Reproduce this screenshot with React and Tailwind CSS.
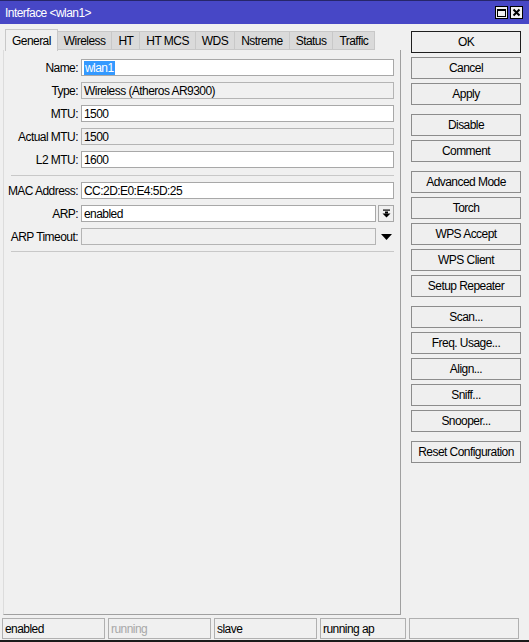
import React from 'react';

const tabs = ['General', 'Wireless', 'HT', 'HT MCS', 'WDS', 'Nstreme', 'Status', 'Traffic'];

const buttonGroups = [
  ['OK', 'Cancel', 'Apply'],
  ['Disable', 'Comment'],
  ['Advanced Mode', 'Torch', 'WPS Accept', 'WPS Client', 'Setup Repeater'],
  ['Scan...', 'Freq. Usage...', 'Align...', 'Sniff...', 'Snooper...'],
  ['Reset Configuration'],
];

function Field({ label, value, gray, selected, extra }) {
  return (
    <div className="flex items-center h-[17px]">
      <div className="w-[74px] text-right shrink-0 whitespace-nowrap">{label}:</div>
      <div
        className={`ml-[3px] h-[17px] flex-1 border flex items-center px-[2px] whitespace-nowrap ${
          gray ? 'bg-[#f0f0f0] border-[#b4b4b4]' : 'bg-white border-[#a8a8a8]'
        }`}
      >
        {selected ? <span className="bg-[#3399ff] text-white px-[1px] leading-[14px]">{value}</span> : value}
      </div>
      {extra}
    </div>
  );
}

export default function App() {
  return (
    <div className="w-[529px] h-[642px] bg-[#f0f0f0] flex flex-col font-['Liberation_Sans',Arial,sans-serif] text-[12px] tracking-[-0.55px] text-black overflow-hidden">
      {/* title bar */}
      <div className="h-[24px] bg-[#4747c6] border-t border-[#26266a] flex items-center justify-between pl-[5px] pr-[6px] text-white shrink-0">
        <span>Interface &lt;wlan1&gt;</span>
        <div className="flex gap-[2px]">
          <div className="w-[13px] h-[13px] bg-[#f0f0f0] border border-black flex items-center justify-center">
            <div className="w-[9px] h-[8px] border border-black border-t-2" />
          </div>
          <div className="w-[13px] h-[13px] bg-[#f0f0f0] border border-black flex items-center justify-center">
            <svg width="9" height="9" viewBox="0 0 9 9">
              <path d="M1.5 1.5 L7.5 7.5 M7.5 1.5 L1.5 7.5" stroke="black" strokeWidth="2" />
            </svg>
          </div>
        </div>
      </div>

      <div className="flex flex-1 min-h-0">
        {/* left side: tabs + panel */}
        <div className="w-[401px] pl-[3px] pt-[4px] pb-[2px] flex flex-col shrink-0">
          <div className="flex items-end h-[22px] pl-[2px]">
            {tabs.map((t, i) =>
              i === 0 ? (
                <div key={t} className="h-[22px] px-[6px] border border-b-0 border-[#c8c8c8] bg-[#f0f0f0] flex items-center relative top-[1px]">
                  {t}
                </div>
              ) : (
                <div key={t} className="h-[19px] px-[6px] border border-l-0 border-[#c8c8c8] bg-[#dadada] flex items-center">
                  {t}
                </div>
              )
            )}
          </div>
          <div className="flex-1 border-l border-r border-b border-[#a0a0a0] border-l-[#dcdcdc] pt-[9px] pr-[6px] flex flex-col gap-[6px]">
            <Field label="Name" value="wlan1" selected />
            <Field label="Type" value="Wireless (Atheros AR9300)" gray />
            <Field label="MTU" value="1500" />
            <Field label="Actual MTU" value="1500" gray />
            <Field label="L2 MTU" value="1600" />
            <div className="h-px bg-[#c8c8c8] ml-[7px] mt-[1px]" />
            <Field label="MAC Address" value="CC:2D:E0:E4:5D:25" />
            <Field
              label="ARP"
              value="enabled"
              extra={
                <div className="ml-[2px] w-[16px] h-[17px] border border-[#a8a8a8] bg-[#f0f0f0] flex items-center justify-center">
                  <svg width="9" height="9" viewBox="0 0 9 9">
                    <rect x="1" y="0.5" width="7" height="1.2" fill="black" />
                    <rect x="3" y="2.5" width="3" height="2" fill="black" />
                    <path d="M0.5 4.5 H8.5 L4.5 8.5 Z" fill="black" />
                  </svg>
                </div>
              }
            />
            <Field
              label="ARP Timeout"
              value=""
              gray
              extra={
                <div className="ml-[2px] w-[16px] h-[17px] flex items-center justify-center">
                  <svg width="11" height="6" viewBox="0 0 11 6">
                    <path d="M0 0 H11 L5.5 6 Z" fill="black" />
                  </svg>
                </div>
              }
            />
            <div className="h-px bg-[#c8c8c8] ml-[7px]" />
          </div>
        </div>

        {/* right side: buttons */}
        <div className="pl-[10px] pt-[7px] flex flex-col gap-[9px]">
          {buttonGroups.map((g, gi) => (
            <div key={gi} className="flex flex-col gap-[4px]">
              {g.map((b) => (
                <div
                  key={b}
                  className={`w-[110px] h-[22px] border bg-[#efefef] flex items-center justify-center ${
                    b === 'OK' ? 'border-[#1e1e1e]' : 'border-[#8c8c8c]'
                  }`}
                >
                  {b}
                </div>
              ))}
            </div>
          ))}
        </div>
      </div>

      {/* status bar */}
      <div className="h-[25px] flex gap-[3px] pl-[2px] pr-[10px] pt-[1px] shrink-0 border-b-2 border-[#1a1a1a]">
        {[
          ['enabled', 'w-[103px]', ''],
          ['running', 'w-[103px]', 'text-[#a8a8a8]'],
          ['slave', 'w-[103px]', ''],
          ['running ap', 'w-[86px]', ''],
          ['', 'flex-1', ''],
        ].map(([t, w, c], i) => (
          <div key={i} className={`${w} h-[21px] border border-[#b0b0b0] flex items-center px-[2px] ${c}`}>
            {t}
          </div>
        ))}
      </div>
    </div>
  );
}
